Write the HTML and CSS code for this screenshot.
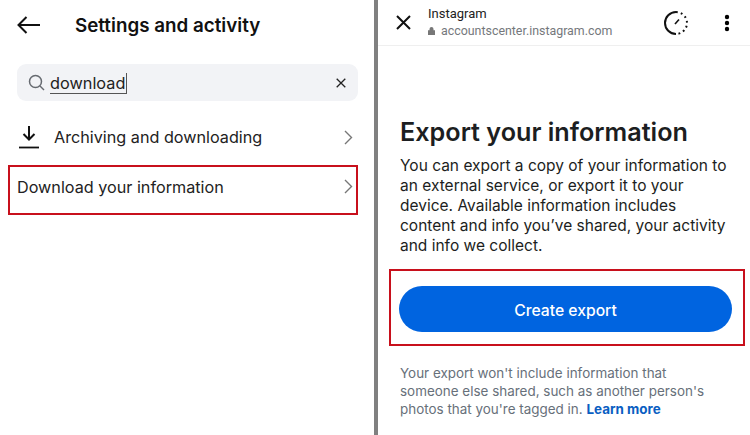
FILE: index.html
```html
<!DOCTYPE html>
<html lang="en">
<head>
<meta charset="utf-8">
<title>Export your information</title>
<link rel="stylesheet" href="styles.css">
</head>
<body>
<div class="page">
  <section class="left">
    <header class="left-head">
      <svg class="back" width="24" height="18" viewBox="0 0 24 18"><path d="M23 9H1.500M9.500 1 1.500 9l8 8" fill="none" stroke="#111" stroke-width="2"/></svg>
      <h1 class="left-title">Settings and activity</h1>
    </header>
    <div class="search">
      <svg class="search-icon" width="17" height="17" viewBox="0 0 17 17"><circle cx="7.500" cy="7.500" r="6" fill="none" stroke="#666a70" stroke-width="1.500"/><path d="m12 12 4 4" stroke="#666a70" stroke-width="1.500"/></svg>
      <span class="query">download</span>
      <svg class="clear" width="10" height="10" viewBox="0 0 10 10"><path d="m.7.7 8.600 8.600M9.300.7.7 9.300" stroke="#222" stroke-width="1.300"/></svg>
    </div>
    <div class="row row-archive">
      <svg class="dl" width="20" height="24" viewBox="0 0 20 24"><path d="M10 1v13M4.500 9 10 14.500 15.500 9" fill="none" stroke="#111" stroke-width="2"/><path d="M0 22.500h20" stroke="#111" stroke-width="1.800"/></svg>
      <span class="row-label">Archiving and downloading</span>
      <svg class="chev" width="9" height="15" viewBox="0 0 9 15"><path d="m1 1 6.500 6.500L1 14" fill="none" stroke="#777" stroke-width="1.400"/></svg>
    </div>
    <div class="row row-download">
      <span class="row-label">Download your information</span>
      <svg class="chev" width="9" height="15" viewBox="0 0 9 15"><path d="m1 1 6.500 6.500L1 14" fill="none" stroke="#777" stroke-width="1.400"/></svg>
    </div>
  </section>
  <section class="right">
    <header class="browser-bar">
      <svg class="close" width="15" height="15" viewBox="0 0 15 15"><path d="m1 1 13 13M14 1 1 14" stroke="#111" stroke-width="2"/></svg>
      <div class="site">
        <div class="site-name">Instagram</div>
        <div class="site-url"><svg class="lock" width="7" height="8" viewBox="0 0 7 8"><path d="M0 3.200h7V8H0zM1.500 3.200V2a2 2 0 0 1 4 0v1.200" fill="#777"/></svg>accountscenter.instagram.com</div>
      </div>
      <svg class="timer" width="26" height="26" viewBox="0 0 26 26"><path d="M13 2A11 11 0 1 0 13 24" fill="none" stroke="#111" stroke-width="2"/><path d="M13 2A11 11 0 0 1 13 24" fill="none" stroke="#111" stroke-width="2" stroke-dasharray="1.800 3.200"/><path d="m12 14 4-4.500" stroke="#111" stroke-width="1.600"/></svg>
      <svg class="dots" width="6" height="18" viewBox="0 0 6 18"><circle cx="3" cy="3" r="2.200"/><circle cx="3" cy="9" r="2.200"/><circle cx="3" cy="15" r="2.200"/></svg>
    </header>
    <main class="content">
      <h2 class="heading">Export your information</h2>
      <p class="body-copy">You can export a copy of your information to an external service, or export it to your device. Available information includes content and info you’ve shared, your activity and info we collect.</p>
      <div class="cta-frame"><button class="cta">Create export</button></div>
      <p class="note">Your export won't include information that someone else shared, such as another person's photos that you're tagged in. <a class="learn">Learn more</a></p>
    </main>
  </section>
</div>
</body>
</html>
```
FILE: styles.css
```css
* { box-sizing: border-box; margin: 0; padding: 0; }
html, body { width: 750px; height: 435px; overflow: hidden; background: #fff; }
body { font-family: Inter, "Liberation Sans", sans-serif; color: #1c1e21; }
.page { display: flex; width: 750px; height: 435px; }
.left { width: 374px; height: 435px; padding: 0 16px 0 8px; }
.right { width: 376px; height: 435px; border-left: 4px solid #808080; }
.left-head { display: flex; align-items: center; height: 50px; padding-left: 9px; }
.back { margin-right: 34px; flex: none; }
.left-title { font-size: 18.800px; font-weight: 600; color: #111; }
.search { display: flex; align-items: center; height: 37px; margin: 14px 0 0 9px; padding: 0 12px 0 11px; background: #f2f3f6; border-radius: 9px; }
.search-icon { flex: none; margin-right: 5px; }
.query { font-size: 16.300px; color: #222; line-height: 20px; margin-top: 2px; border-bottom: 1px solid #555; border-right: 1px solid #555; padding-right: 1px; }
.clear { margin-left: auto; }
.row { display: flex; align-items: center; }
.row-archive { height: 48px; margin-top: 12px; padding: 0 5px 0 11px; }
.dl { margin-right: 15px; flex: none; }
.row-label { font-size: 16.200px; color: #222; }
.chev { margin-left: auto; flex: none; }
.row-download { height: 50px; margin-top: 4px; padding: 0 3px 7px 8px; border: 2px solid #c8101c; }
.row-download .row-label { margin-left: -1px; }
.browser-bar { display: flex; align-items: center; height: 46px; padding: 0 20px 0 18px; border-bottom: 1px solid #efefef; }
.close { flex: none; margin-right: 17px; }
.site { flex: 1; }
.site-name { font-family: Roboto, sans-serif; font-size: 13px; line-height: 16px; color: #222; }
.site-url { font-family: Roboto, sans-serif; font-size: 12.400px; line-height: 17px; color: #75787c; display: flex; align-items: center; gap: 6px; }
.timer { flex: none; margin-right: 35px; }
.dots { flex: none; }
.content { padding: 0 18px 0 22px; }
.heading { font-size: 25.200px; font-weight: 600; line-height: 32px; margin-top: 70px; color: #1c1e21; }
.body-copy { font-size: 15.500px; line-height: 20px; margin-top: 8px; color: #1c1e21; }
.cta-frame { width: 356px; height: 77px; margin: 13px 0 0 -11px; padding: 15px 11px 0 8px; border: 2px solid #c8101c; }
.cta { display: block; width: 333px; height: 46px; padding-top: 2px; border: 0; border-radius: 23px; background: #0064e0; color: #fff; font: 500 15.700px Inter, sans-serif; }
.note { font-size: 13.450px; line-height: 18px; margin-top: 18px; max-width: 322px; color: #67707a; }
.learn { color: #0a5ec2; font-weight: 700; }
```
